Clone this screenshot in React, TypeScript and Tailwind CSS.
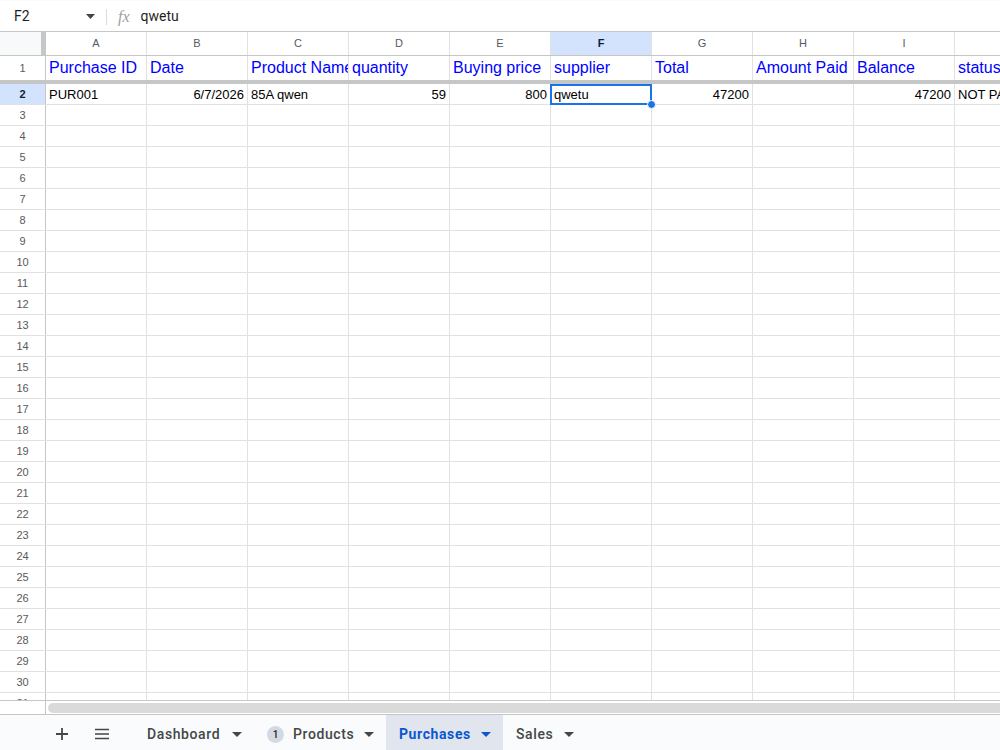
import React from "react";

const COLS = ["A", "B", "C", "D", "E", "F", "G", "H", "I", "J"];
const ROW1 = ["Purchase ID", "Date", "Product Name", "quantity", "Buying price", "supplier", "Total", "Amount Paid", "Balance", "status"];
const ROW2: { t: string; r?: boolean }[] = [
  { t: "PUR001" },
  { t: "6/7/2026", r: true },
  { t: "85A qwen" },
  { t: "59", r: true },
  { t: "800", r: true },
  { t: "qwetu" },
  { t: "47200", r: true },
  { t: "" },
  { t: "47200", r: true },
  { t: "NOT PAID" },
];

function Caret({ color = "#444746" }: { color?: string }) {
  return (
    <svg width="10" height="5" viewBox="0 0 10 5" className="shrink-0">
      <path d="M0 0 L10 0 L5 5 Z" fill={color} />
    </svg>
  );
}

export default function App() {
  const emptyRows = Array.from({ length: 29 }, (_, i) => i + 3);
  return (
    <div
      className="w-[1000px] h-[750px] overflow-hidden flex flex-col bg-white"
      style={{ fontFamily: '"Liberation Sans", Arial, sans-serif' }}
    >
      {/* Formula bar */}
      <div className="h-[32px] shrink-0 border-b border-[#c4c7c5] bg-white flex items-center pt-[2px] relative">
        <div className="absolute top-0 left-0 right-0 h-[1px] bg-[#f9fbfd]" />
        <div className="w-[106px] flex items-center pl-[14px] pr-[11px] justify-between">
          <span className="text-[14px] text-[#1f1f1f]" style={{ fontFamily: "Roboto, sans-serif" }}>F2</span>
          <svg width="9" height="5" viewBox="0 0 9 5"><path d="M0 0 L9 0 L4.5 5 Z" fill="#444746" /></svg>
        </div>
        <div className="w-px h-[16px] bg-[#dadce0]" />
        <span
          className="ml-[11px] text-[16px] italic text-[#9aa0a6]"
          style={{ fontFamily: '"Liberation Serif", serif' }}
        >
          fx
        </span>
        <span className="ml-[11px] text-[14px] text-[#1f1f1f]" style={{ fontFamily: "Roboto, sans-serif" }}>qwetu</span>
      </div>

      {/* Grid */}
      <div className="h-[668px] shrink-0 overflow-hidden relative">
        {/* column headers */}
        <div className="flex h-[24px] border-b border-[#c4c7c5]">
          <div className="w-[46px] shrink-0 bg-[#f8f9fa] border-r border-[#c4c7c5] flex justify-end">
            <div className="w-[4px] h-full bg-[#c4c7c5]" />
          </div>
          {COLS.map((c) => (
            <div
              key={c}
              className={`w-[101px] shrink-0 border-r border-[#e1e1e1] flex items-center justify-center text-[11px] ${
                c === "F" ? "bg-[#d3e3fd] font-bold text-[#0b1f3f]" : "text-[#575a5d] bg-white"
              }`}
            >
              {c === "J" ? "" : c}
            </div>
          ))}
        </div>
        {/* row 1 */}
        <div className="flex h-[24px]">
          <div className="w-[46px] shrink-0 border-r border-[#c4c7c5] flex items-center justify-center text-[11px] text-[#575a5d]">1</div>
          {ROW1.map((t, i) => (
            <div
              key={i}
              className="w-[101px] shrink-0 border-r border-[#e1e1e1] flex items-center px-[3px] text-[16px] text-[#0000ff] whitespace-nowrap overflow-hidden"
            >
              {t}
            </div>
          ))}
        </div>
        {/* freeze bar */}
        <div className="h-[4px] bg-[#c4c7c5]" />
        {/* row 2 */}
        <div className="flex h-[21px] border-b border-[#e1e1e1] relative z-10">
          <div className="w-[46px] shrink-0 border-r border-[#c4c7c5] bg-[#d3e3fd] flex items-center justify-center text-[11px] font-bold text-[#0b1f3f]">2</div>
          {ROW2.map((c, i) => (
            <div
              key={i}
              className={`w-[101px] shrink-0 border-r border-[#e1e1e1] flex items-center px-[3px] pt-[2px] text-[13px] text-black whitespace-nowrap relative ${
                c.r ? "justify-end" : "justify-start"
              } ${i === 5 ? "" : "overflow-hidden"}`}
            >
              {c.t}
              {i === 5 && (
                <>
                  <div className="absolute -left-px -right-px top-0 -bottom-px border-2 border-[#1a73e8]" />
                  <div className="absolute -right-[5px] -bottom-[5px] w-[9px] h-[9px] rounded-full bg-[#1a73e8] border border-white" />
                </>
              )}
            </div>
          ))}
        </div>
        {emptyRows.map((n) => (
          <div key={n} className="flex h-[21px] border-b border-[#e1e1e1]">
            <div className="w-[46px] shrink-0 border-r border-[#c4c7c5] flex items-center justify-center text-[11px] text-[#575a5d]">
              {n}
            </div>
            {COLS.map((c) => (
              <div key={c} className="w-[101px] shrink-0 border-r border-[#e1e1e1]" />
            ))}
          </div>
        ))}
      </div>

      {/* Horizontal scrollbar */}
      <div className="h-[15px] shrink-0 border-t border-b border-[#c4c7c5] flex bg-white">
        <div className="w-[46px] shrink-0 border-r border-[#c4c7c5]" />
        <div className="flex-1 flex items-center pl-[2px]">
          <div className="h-[10px] w-full rounded-l-full bg-[#dadada]" />
        </div>
      </div>

      {/* Sheet tabs */}
      <div
        className="flex-1 bg-[#f9fbfd] flex items-stretch pt-[3px]"
        style={{ fontFamily: 'Roboto, "Noto Sans", sans-serif' }}
      >
        <div className="w-[48px] shrink-0" />
        <div className="w-[28px] flex items-center justify-center">
          <svg width="14" height="14" viewBox="0 0 14 14">
            <path d="M7 1 V13 M1 7 H13" stroke="#444746" strokeWidth="1.8" />
          </svg>
        </div>
        <div className="w-[12px]" />
        <div className="w-[28px] flex items-center justify-center">
          <svg width="16" height="12" viewBox="0 0 16 12">
            <path d="M1 1.5 H15 M1 6 H15 M1 10.5 H15" stroke="#444746" strokeWidth="1.6" />
          </svg>
        </div>
        <div className="w-[17px]" />
        <div className="w-[119px] flex items-center pl-[14px] gap-[12px] text-[14px] font-medium text-[#444746] tracking-[0.6px]">
          <span>Dashboard</span>
          <Caret />
        </div>
        <div className="w-[134px] flex items-center pl-[15px] text-[14px] font-medium text-[#444746] tracking-[0.6px]">
          <span className="w-[17px] h-[17px] rounded-full bg-[#d3dae3] text-[10px] flex items-center justify-center text-[#1f1f1f] tracking-normal">1</span>
          <span className="ml-[9px]">Products</span>
          <span className="ml-[10px]"><Caret /></span>
        </div>
        <div className="w-[117px] -mt-[3px] flex items-center pt-[3px] pl-[13px] gap-[10px] text-[14px] font-bold text-[#0b57d0] bg-[#e1e6ee] tracking-[0.6px]">
          <span>Purchases</span>
          <Caret color="#0b57d0" />
        </div>
        <div className="w-[82px] flex items-center pl-[13px] gap-[11px] text-[14px] font-medium text-[#444746] tracking-[0.6px]">
          <span>Sales</span>
          <Caret />
        </div>
      </div>
    </div>
  );
}
